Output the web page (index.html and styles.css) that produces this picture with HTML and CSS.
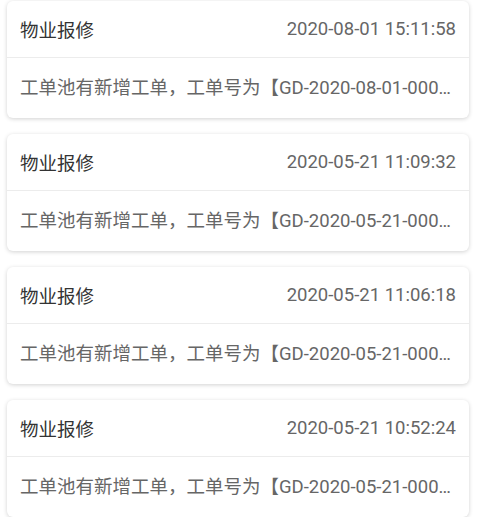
FILE: index.html
```html
<!DOCTYPE html>
<html lang="zh-CN">
<head>
    <meta charset="UTF-8">
    <meta name="viewport" content="width=device-width, initial-scale=1.0">
    <title>消息列表</title>
    <link rel="stylesheet" href="styles.css">
</head>
<body>
    <div class="message-list">
        <div class="message-card">
            <div class="message-header">
                <span class="message-type">物业报修</span>
                <span class="message-time">2020-08-01 15:11:58</span>
            </div>
            <div class="message-body">工单池有新增工单，工单号为【GD-2020-08-01-00012】</div>
        </div>
        <div class="message-card">
            <div class="message-header">
                <span class="message-type">物业报修</span>
                <span class="message-time">2020-05-21 11:09:32</span>
            </div>
            <div class="message-body">工单池有新增工单，工单号为【GD-2020-05-21-00031】</div>
        </div>
        <div class="message-card">
            <div class="message-header">
                <span class="message-type">物业报修</span>
                <span class="message-time">2020-05-21 11:06:18</span>
            </div>
            <div class="message-body">工单池有新增工单，工单号为【GD-2020-05-21-00030】</div>
        </div>
        <div class="message-card">
            <div class="message-header">
                <span class="message-type">物业报修</span>
                <span class="message-time">2020-05-21 10:52:24</span>
            </div>
            <div class="message-body">工单池有新增工单，工单号为【GD-2020-05-21-00029】</div>
        </div>
    </div>
</body>
</html>
```

FILE: styles.css
```css
body {
    font-family: Roboto, "Noto Sans CJK SC", sans-serif;
    background-color: #ffffff;
    margin: 0;
    padding: 0;
    color: #333;
}

.message-list {
    display: flex;
    flex-direction: column;
    gap: 16px;
    padding: 1px 12px 0 7px;
}

.message-card {
    background: #ffffff;
    border-radius: 6px;
    box-shadow: 0 1px 4px rgba(0, 0, 0, 0.18);
}

.message-header {
    display: flex;
    justify-content: space-between;
    align-items: center;
    height: 56px;
    padding: 0 13px;
    border-bottom: 1px solid #ececec;
}

.message-type {
    font-size: 18.5px;
    color: #333;
}

.message-time {
    font-size: 18.5px;
    color: #666;
}

.message-body {
    height: 60px;
    line-height: 60px;
    padding: 0 13px;
    font-size: 18.5px;
    color: #666;
    white-space: nowrap;
    overflow: hidden;
    text-overflow: ellipsis;
}
```
